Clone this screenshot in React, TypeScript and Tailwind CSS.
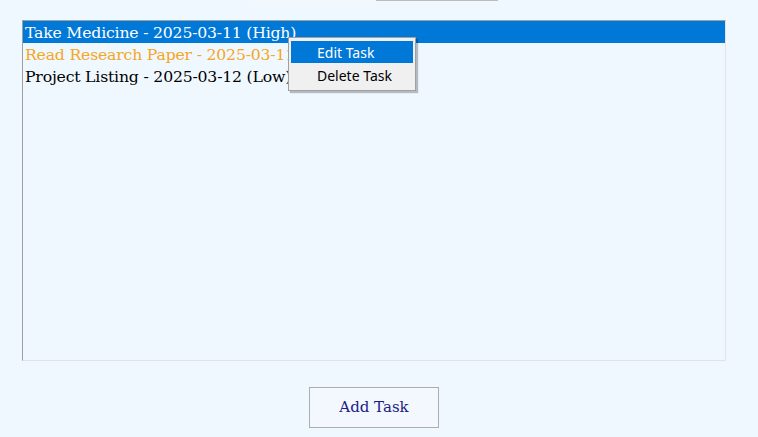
import React from "react";

const serif = { fontFamily: '"DejaVu Serif", "Liberation Serif", serif' };

export default function App() {
  return (
    <div className="relative w-[758px] h-[437px] bg-[#f0f8ff] overflow-hidden flex flex-col">
      <div className="h-px flex">
        <div className="ml-[248px] w-[128px] h-px bg-[#f7f7f7]" />
        <div className="w-[122px] h-px bg-[#bcbcbc]" />
      </div>
      <div className="mt-[19px] ml-[22px] w-[704px] h-[341px] border border-t-[#a0a0a0] border-l-[#a0a0a0] border-r-[#e3e3e3] border-b-[#e3e3e3] bg-[#f0f8ff] flex flex-col text-[15.7px] leading-[22px]" style={serif}>
        <div className="h-[22px] bg-[#0078d7] text-white pl-[2px] pt-[1px] tracking-[-0.2px]">Take Medicine - 2025-03-11 (High)</div>
        <div className="h-[22px] text-[#f5a623] pl-[2px] pt-[1px] tracking-[-0.2px]">Read Research Paper - 2025-03-11 (Medium)</div>
        <div className="h-[22px] text-black pl-[2px] pt-[1px] tracking-[-0.2px]">Project Listing - 2025-03-12 (Low)</div>
      </div>
      <div className="flex justify-center mt-[26px]">
        <button className="ml-[-10px] w-[130px] h-[41px] border border-[#adadad] bg-[#f2f8fd] text-[#1c1c86] text-[15px] font-medium" style={serif}>Add Task</button>
      </div>

      <div className="absolute left-[288px] top-[37px] w-[128px] h-[54px] bg-[#f0f0f0] border border-[#a0a0a0] shadow-[2px_2px_1px_rgba(0,0,0,0.25)] px-[2px] pt-[3px] flex flex-col text-[14px]" style={{ fontFamily: '"Noto Sans", "Open Sans", sans-serif' }}>
        <div className="h-[22px] bg-[#0078d7] text-white pl-[26px] flex items-center">Edit Task</div>
        <div className="h-[24px] text-black pl-[26px] flex items-center">Delete Task</div>
      </div>
    </div>
  );
}
